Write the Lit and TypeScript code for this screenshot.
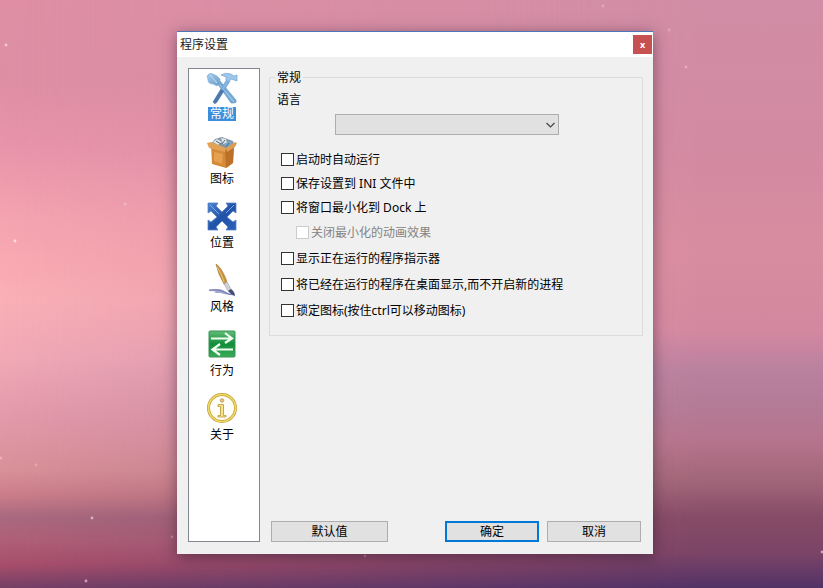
import { LitElement, html, css, svg } from "lit";
import { customElement, state } from "lit/decorators.js";
import { classMap } from "lit/directives/class-map.js";

const tools = svg`
  <defs>
    <linearGradient id="steel" x1="0" y1="0" x2="1" y2="1">
      <stop offset="0" stop-color="#a4cdec"/><stop offset="1" stop-color="#6a9ccb"/>
    </linearGradient>
  </defs>
  <path d="M11 11 L14 9 L30 28 Q31 31 28 31 L25 31 Z" fill="#78aad6" stroke="#5f92c3" stroke-width=".6"/>
  <path d="M14 13 L28 30" stroke="#a9d0ec" stroke-width="1"/>
  <path d="M1 4 Q3 0 7 2 L11 4 L14 7 L14 11 L11 14 L7 12 Q2 12 2 8 Z" fill="url(#steel)" stroke="#84b2da" stroke-width=".6"/>
  <path d="M4 3 L11 11" stroke="#cbe3f5" stroke-width="1"/>
  <path d="M21 7 L24 9 L11 30 Q9 33 7 30 Z" fill="#86b5dd" stroke="#5f92c3" stroke-width=".6"/>
  <path d="M15 17 L18 19 L11 30 Q9 33 7 30 Z" fill="#4a79aa"/>
  <path d="M15 3 Q19 0 25 2 L28 4 L31 3 L31 9 L28 8 L25 7 L23 10 L20 8 L20 5 Z" fill="#9dc6e9" stroke="#76a7d2" stroke-width=".7"/>`;

const box = svg`
  <path d="M4 9 L9 3 L16 1 L27 5 L28 9 L20 14 Z" fill="#8495a5"/>
  <path d="M7 6 L11 3 L16 6 L12 9 Z M15 2 L20 3 L21 7 L17 8 Z" fill="#dde7ee"/>
  <path d="M18 8 L24 5 L27 8 L21 12 Z" fill="#77a5cc"/>
  <path d="M10 5 L15 8 M19 4 L16 8 M23 7 L20 11" stroke="#56656f" stroke-width="1"/>
  <path d="M5 9 L19 13 L28 9 L27 27 L20 32 L6 28 Z" fill="#d58a38"/>
  <path d="M19 13 L28 9 L27 27 L20 32 Z" fill="#bd7027"/>
  <path d="M1 7 L5 6 L20 12 L19 16 L3 12 Z" fill="#e2a256"/>
  <path d="M20 12 L29 6 L31 7 L29 11 L21 16 Z" fill="#dd9d52"/>
  <path d="M8 16 L17 18 L16 28 L8 25 Z" fill="#f0b062" opacity=".6"/>`;

const arrows = svg`
  <defs>
    <linearGradient id="blue" x1="0" y1="0" x2="1" y2="1">
      <stop offset="0" stop-color="#4d83cf"/><stop offset=".5" stop-color="#2252a8"/><stop offset="1" stop-color="#2c60b8"/>
    </linearGradient>
  </defs>
  <path d="M2 3 H12 L10 6 L16 12 L22 6 L20 3 H30 V13 L27 11 L21 17 L27 22 L30 20 V30 H20 L22 27 L16 21 L10 27 L12 30 H2 V20 L5 22 L11 17 L5 11 L2 13 Z" fill="url(#blue)" stroke="#5485cb" stroke-width=".8"/>
  <path d="M4 5 L13 14 M28 5 L20 13" stroke="#7eabe3" stroke-width="1" fill="none"/>`;

const brush = svg`
  <path d="M3 26 Q12 24 17 26 Q21 29 29 31 Q20 31 15 29 L8 29 Q13 27 3 27 Z" fill="#a3a7cf"/>
  <path d="M3 26 Q13 25 18 28 T28 31" fill="none" stroke="#666ca5" stroke-width=".8"/>
  <path d="M10 0 Q15 3 20 15 L21 19 L18 20 Q12 10 10 0 Z" fill="#c8953f" stroke="#a0722c" stroke-width=".6"/>
  <path d="M11 3 Q15 8 18 18" stroke="#efcd83" stroke-width=".9" fill="none"/>
  <path d="M21 18 L25 25 L22 27 L18 20 Z" fill="#d1d2d6" stroke="#93959f" stroke-width=".5"/>
  <path d="M25 25 Q29 28 29 32 Q24 30 22 27 Z" fill="#434b78"/>`;

const swap = svg`
  <defs>
    <linearGradient id="green" x1="0" y1="0" x2="0" y2="1">
      <stop offset="0" stop-color="#62bd76"/><stop offset=".5" stop-color="#128d3b"/><stop offset="1" stop-color="#3cac58"/>
    </linearGradient>
  </defs>
  <rect x="3" y="3" width="26" height="26" rx="1" fill="url(#green)" stroke="#3c9156"/>
  <path d="M5 10.500 H25 M19 5 L26 10.500 L19 15" fill="none" stroke="#f2fff2" stroke-width="2.200"/>
  <path d="M27 21.500 H7 M14 16 L6.500 21.500 L14 27" fill="none" stroke="#f2fff2" stroke-width="2.200"/>`;

const info = svg`
  <circle cx="16" cy="16" r="13.500" fill="#fffef8" stroke="#c09c36" stroke-width="3"/>
  <circle cx="16" cy="16" r="13.500" fill="none" stroke="#f2db63" stroke-width="1.600"/>
  <circle cx="16" cy="8.500" r="1.800" fill="#e8c488" stroke="#b08b50" stroke-width=".7"/>
  <path d="M12 12.500 H17.500 V23.500 H20 V25 H12 V23.500 H14.500 V14.500 H12 Z" fill="#f7e48a" stroke="#b89438" stroke-width=".8"/>`;

const pages = [
  { name: "常规", art: tools },
  { name: "图标", art: box },
  { name: "位置", art: arrows },
  { name: "风格", art: brush },
  { name: "行为", art: swap },
  { name: "关于", art: info },
];

const options = [
  { text: "启动时自动运行", kind: "tight" },
  { text: "保存设置到 INI 文件中", kind: "tight" },
  { text: "将窗口最小化到 Dock 上", kind: "tight" },
  { text: "关闭最小化的动画效果", kind: "nested" },
  { text: "显示正在运行的程序指示器", kind: "loose" },
  { text: "将已经在运行的程序在桌面显示,而不开启新的进程", kind: "loose" },
  { text: "锁定图标(按住ctrl可以移动图标)", kind: "loose" },
];

const stars = [
  [6, 45, 0.7], [125, 204, 0.4], [15, 241, 0.9], [92, 518, 0.6], [86, 581, 0.6],
  [1, 458, 0.4], [36, 465, 0.3], [669, 30, 0.3], [686, 67, 0.4], [603, 6, 0.3],
  [822, 552, 0.6], [365, 556, 0.3], [172, 537, 0.3],
];

@customElement("app-root")
export class AppRoot extends LitElement {
  @state() private current = 0;

  static styles = css`
    :host {
      display: block;
      font: 12px/16px "Noto Sans", "Noto Sans CJK SC", sans-serif;
      color: #000;
    }
    * { box-sizing: border-box; }
    button, select, input { font: inherit; color: inherit; margin: 0; }
    .desktop {
      position: relative;
      display: flex;
      min-height: 100vh;
      padding: 31px 170px 34px 177px;
      background: linear-gradient(180deg, #df8fa5 0%, #de8fa5 14%, #e994aa 25%, #f4a2b0 36%, #f9abb3 46%, #fab0b7 51%, #f1a9b6 61%, #e39aaa 71%, #d99199 80%, #cc7f8b 84%, #a9697f 88%, #b06078 92%, #a84e6b 96%, #744066 100%);
    }
    .shade {
      position: absolute;
      inset: 0;
      background: linear-gradient(180deg, #d18da5 0%, #d28aa2 25%, #d88c9f 43%, #d488a0 56%, #b9819f 63%, #b47c98 68%, #b5748c 75%, #a06578 82%, #864b66 88%, #7c4467 94%, #523266 100%);
      mask-image: linear-gradient(90deg, transparent 0%, #000 85%);
    }
    .stars { position: absolute; inset: 0; width: 100%; height: 100%; }
    .dialog {
      position: relative;
      flex: 1;
      display: flex;
      flex-direction: column;
      border-top: 1px solid #4878b8;
      background: #f0f0f0;
      box-shadow: 0 3px 14px rgba(40, 20, 40, .5);
    }
    .titlebar {
      display: flex;
      align-items: center;
      justify-content: space-between;
      height: 25px;
      padding: 0 1px 0 3px;
      background: #fff;
    }
    .title { margin: 0; font: inherit; color: #222; }
    .close {
      width: 19px;
      height: 19px;
      padding: 0;
      border: 0;
      background: #c75050;
      color: #fff;
      font: bold 9px/16px "Noto Sans", sans-serif;
    }
    .body {
      flex: 1;
      display: flex;
      gap: 9px;
      padding: 11px 10px 12px 11px;
    }
    .pages {
      display: flex;
      flex-direction: column;
      gap: 13px;
      width: 72px;
      padding: 3px 4px 0 0;
      border: 1px solid #828790;
      background: #fff;
    }
    .page {
      display: flex;
      flex-direction: column;
      align-items: center;
      gap: 3px;
      padding: 0;
      border: 0;
      background: none;
    }
    .art { width: 32px; height: 32px; }
    .name { padding: 0 2px; }
    .page.on .name {
      background: #3c8ddc;
      color: #fff;
      line-height: 14px;
      margin-bottom: 2px;
    }
    .main {
      flex: 1;
      display: flex;
      flex-direction: column;
      justify-content: space-between;
    }
    .group {
      margin: 0;
      padding: 6px 8px 12px;
      border: 1px solid #dcdcdc;
    }
    .group legend { margin-left: -3px; padding: 2px 2px 0; }
    .language { display: flex; flex-direction: column; gap: 6px; }
    .language label { margin-left: -1px; }
    .picker {
      position: relative;
      align-self: center;
      width: 224px;
      margin-right: 18px;
      display: flex;
    }
    .combo {
      appearance: none;
      width: 100%;
      height: 21px;
      padding: 0 20px 0 4px;
      border: 1px solid #adadad;
      border-radius: 0;
      background: #e1e1e1;
    }
    .chevron {
      position: absolute;
      right: 4px;
      top: 7px;
      width: 9px;
      height: 8px;
      pointer-events: none;
    }
    .options { display: flex; flex-direction: column; margin: 12px 0 0 3px; }
    .option {
      display: flex;
      align-items: center;
      gap: 2px;
      height: 24px;
    }
    .option.loose { height: 26px; }
    .option.nested { height: 26px; padding-left: 15px; color: #838383; }
    .caption { padding-top: 2px; }
    .tick {
      appearance: none;
      width: 13px;
      height: 13px;
      border: 1px solid #333;
      background: #fff;
    }
    .tick:checked { background: #0078d7; }
    .tick:disabled { border-color: #ccc; }
    .actions {
      display: flex;
      gap: 8px;
      padding: 0 2px;
    }
    .action {
      width: 94px;
      height: 21px;
      padding: 1px 0 0;
      border: 1px solid #adadad;
      background: #e1e1e1;
    }
    .action.reset { width: 117px; margin-right: auto; }
    .action.primary { border: 2px solid #0078d7; }
  `;

  render() {
    return html`
      <main class="desktop">
        <div class="shade"></div>
        <svg class="stars" aria-hidden="true">
          ${stars.map(([x, y, glow]) => svg`<circle cx=${x} cy=${y} r="1.400" fill="#ffe4ea" opacity=${glow}></circle>`)}
        </svg>
        <section class="dialog" role="dialog" aria-labelledby="title">
          <header class="titlebar">
            <h1 class="title" id="title">程序设置</h1>
            <button class="close" type="button">x</button>
          </header>
          <div class="body">
            <nav class="pages">
              ${pages.map((p, i) => html`
                <button type="button" class=${classMap({ page: true, on: i === this.current })} @click=${() => (this.current = i)}>
                  <svg class="art" viewBox="0 0 32 32" aria-hidden="true">${p.art}</svg>
                  <span class="name">${p.name}</span>
                </button>`)}
            </nav>
            <div class="main">
              <fieldset class="group">
                <legend>常规</legend>
                <div class="language">
                  <label for="language">语言</label>
                  <div class="picker">
                    <select class="combo" id="language"><option></option></select>
                    <svg class="chevron" viewBox="0 0 9 8" aria-hidden="true"><path d="M.5 2 L4.500 6 L8.500 2" fill="none" stroke="#444" stroke-width="1.200"/></svg>
                  </div>
                </div>
                <div class="options">
                  ${options.map((o) => html`
                    <label class="option ${o.kind}">
                      <input class="tick" type="checkbox" ?disabled=${o.kind === "nested"}>
                      <span class="caption">${o.text}</span>
                    </label>`)}
                </div>
              </fieldset>
              <div class="actions">
                <button class="action reset" type="button">默认值</button>
                <button class="action primary" type="button">确定</button>
                <button class="action" type="button">取消</button>
              </div>
            </div>
          </div>
        </section>
      </main>`;
  }
}
